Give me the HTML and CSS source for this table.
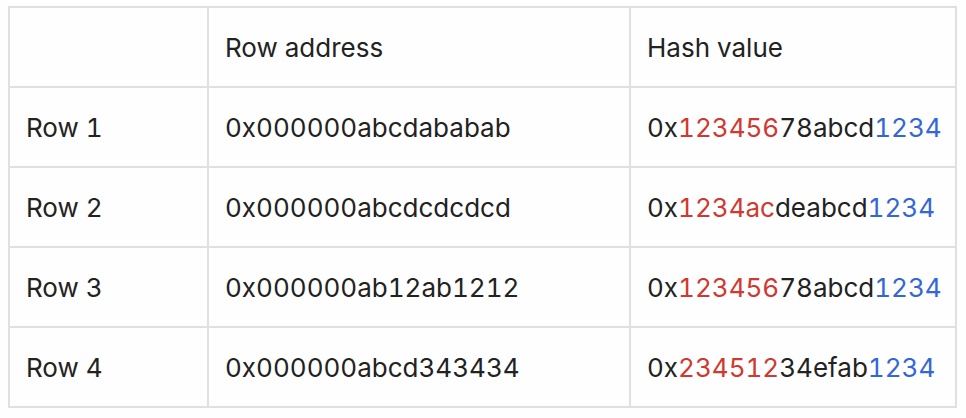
FILE: index.html
```html
<!DOCTYPE html>
<html>
<head>
<meta charset="utf-8">
<link rel="stylesheet" href="styles.css">
</head>
<body>
<table class="hash-table">
  <thead>
    <tr><th class="c1"></th><th class="c2">Row address</th><th class="c3">Hash value</th></tr>
  </thead>
  <tbody>
    <tr><td>Row 1</td><td>0x000000abcdababab</td><td>0x<span class="r">123456</span>78abcd<span class="b">1234</span></td></tr>
    <tr><td>Row 2</td><td>0x000000abcdcdcdcd</td><td>0x<span class="r">1234ac</span>deabcd<span class="b">1234</span></td></tr>
    <tr><td>Row 3</td><td>0x000000ab12ab1212</td><td>0x<span class="r">123456</span>78abcd<span class="b">1234</span></td></tr>
    <tr><td>Row 4</td><td>0x000000abcd343434</td><td>0x<span class="r">234512</span>34efab<span class="b">1234</span></td></tr>
  </tbody>
</table>
</body>
</html>
```
FILE: styles.css
```css
html, body { background: #fefefe; }
body { margin: 6px 8px; font-family: "Inter", sans-serif; color: #222; }
.hash-table { border-collapse: collapse; width: 949px; table-layout: fixed; }
.hash-table th, .hash-table td {
  border: 2px solid #e0e0e0;
  height: 78px;
  padding: 0 16px;
  font-size: 26px;
  font-weight: 400;
  font-variant-numeric: tabular-nums;
  text-align: left;
  vertical-align: middle;
  white-space: nowrap;
}
.c1 { width: 165px; }
.c2 { width: 388px; }
.r { color: #d0392f; }
.b { color: #3367d6; }
```
